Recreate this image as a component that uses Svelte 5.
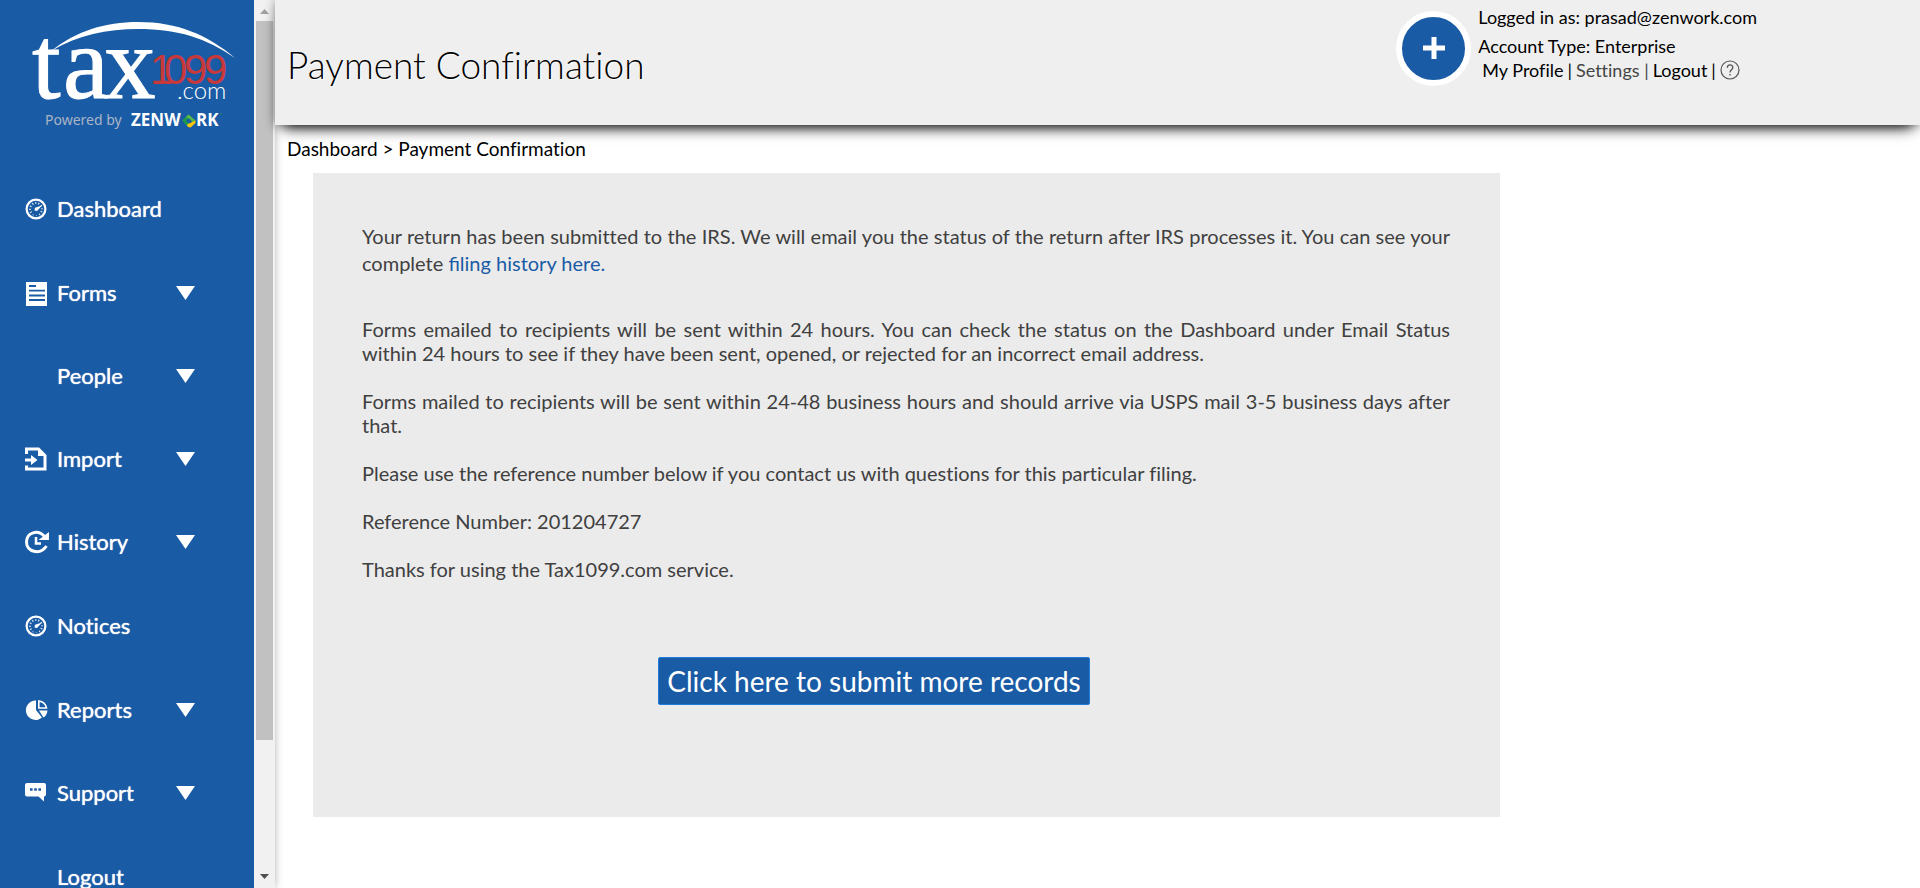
<script>
  const items = [
    { label: 'Dashboard', icon: 'gauge', menu: false },
    { label: 'Forms', icon: 'form', menu: true },
    { label: 'People', icon: '', menu: true },
    { label: 'Import', icon: 'import', menu: true },
    { label: 'History', icon: 'history', menu: true },
    { label: 'Notices', icon: 'gauge', menu: false },
    { label: 'Reports', icon: 'pie', menu: true },
    { label: 'Support', icon: 'chat', menu: true },
    { label: 'Logout', icon: '', menu: false }
  ];
</script>

<div class="app">
  <aside class="sidebar">
    <div class="side-content">
      <a class="logo" href="#home" aria-label="tax1099.com, powered by Zenwork">
        <svg width="254" height="140" viewBox="0 0 254 140">
          <path d="M51 51C76 31 105 22 138 22C178 22 208 35 235 58C206 38 178 29 138 29C107 29 78 35 51 51Z" fill="#fff" />
          <text class="tax" x="32 63 104" y="98">tax</text>
          <text class="digits" x="150 164 184 204" y="84">1099</text>
          <text class="com" x="177" y="99">.com</text>
          <text class="powered" x="45" y="125">Powered by</text>
          <text class="zen" x="131" y="126">ZENW</text>
          <text class="zen" x="196" y="126">RK</text>
          <path d="M182 120.500L188.500 114.500L191.500 117L187.500 121L190.500 124.500L188 127Z" fill="#1d9a4b" />
          <path d="M188.500 114.500L195.500 120.500L193 122.500L186 117Z" fill="#57b847" />
          <path d="M188 127L187 124.500L195.500 120.500V123L190.500 127.500Z" fill="#fdc60b" />
          <path d="M188.700 118.300L191.700 120.700L188.500 123L186 120.800Z" fill="#1a5ba5" />
          <circle cx="221" cy="114" r="1" fill="#1d7a6b" />
        </svg>
      </a>
      <nav>
        {#each items as item}
          <a class="item" class:leaf={!item.menu} href="#{item.label.toLowerCase()}">
            <span class="icon">
              {#if item.icon === 'gauge'}
                <svg width="24" height="24" viewBox="0 0 24 24">
                  <circle cx="11" cy="12" r="9.400" fill="none" stroke="#fff" stroke-width="2.200" />
                  <circle cx="11" cy="12" r="6" fill="none" stroke="#fff" stroke-width="2" stroke-dasharray="1.200 1.900" stroke-dashoffset="1" pathLength="37" opacity=".8" />
                  <path d="M10 10.800L17 8.500L12 14L9.500 13.500Z" fill="#fff" />
                  <path d="M7 15.500H15L13 18.500H9Z" fill="#1a5ba5" />
                </svg>
              {:else if item.icon === 'form'}
                <svg width="24" height="26" viewBox="0 0 24 26">
                  <path d="M1 2H22V26H1Z" fill="#fff" />
                  <path d="M4 6H11M4 10.700H20M4 15.500H20M4 20H20" stroke="#1a5ba5" stroke-width="1.800" />
                </svg>
              {:else if item.icon === 'import'}
                <svg width="24" height="24" viewBox="0 0 24 24">
                  <path d="M1.500 7V2H13.500L20 8.500V22H1.500V18.500" fill="none" stroke="#fff" stroke-width="3" />
                  <path d="M13 1.500V9H20.500Z" fill="#fff" />
                  <path d="M0 11.500H6V8L12.500 13L6 18V14.500H0Z" fill="#fff" />
                </svg>
              {:else if item.icon === 'history'}
                <svg width="24" height="24" viewBox="0 0 24 24">
                  <path d="M19.500 6.500C13 -1 1.500 2.500 1.500 12C1.500 22 15 25.500 21.500 16" fill="none" stroke="#fff" stroke-width="3" />
                  <path d="M24 2V10H13.500Z" fill="#fff" />
                  <path d="M11 7V13.500H16" fill="none" stroke="#fff" stroke-width="2.500" />
                </svg>
              {:else if item.icon === 'pie'}
                <svg width="24" height="24" viewBox="0 0 24 24">
                  <path d="M11 2.500V12L17 19.500A9.700 9.700 0 1 1 11 2.500Z" fill="#fff" />
                  <path d="M13.800 3A9 9 0 0 1 21.500 10H13.800Z" fill="none" stroke="#fff" stroke-width="1.600" />
                  <path d="M14 12.500H22.500Q22 17 18.500 19.500Z" fill="#fff" />
                </svg>
              {:else if item.icon === 'chat'}
                <svg width="24" height="24" viewBox="0 0 24 24">
                  <path d="M2 2H19A2 2 0 0 1 21 4V13.500A2 2 0 0 1 19 15.500V20.500L13.500 15.500H2A2 2 0 0 1 0 13.500V4A2 2 0 0 1 2 2Z" fill="#fff" />
                  <path d="M5 8.500H16" stroke="#1a5ba5" stroke-width="2.500" stroke-dasharray="2.600 1.600" />
                </svg>
              {/if}
            </span>
            <span class="label">{item.label}</span>
            {#if item.menu}
              <svg class="caret" width="19" height="14" viewBox="0 0 19 14"><path d="M0 0H19L9.500 14Z" fill="#fff" /></svg>
            {/if}
          </a>
        {/each}
      </nav>
    </div>
    <div class="track" aria-hidden="true">
      <svg width="9" height="5" viewBox="0 0 9 5"><path d="M0 5L4.500 0L9 5Z" fill="#a0a0a0" /></svg>
      <div class="rail"><div class="thumb"></div></div>
      <svg width="9" height="5" viewBox="0 0 9 5"><path d="M0 0L4.500 5L9 0Z" fill="#505050" /></svg>
    </div>
  </aside>

  <div class="page">
    <header>
      <h1>Payment Confirmation</h1>
      <div class="account">
        <button class="plus" aria-label="Add">
          <svg width="24" height="24" viewBox="0 0 24 24"><path d="M12 0V22M1 11H23" stroke="#fff" stroke-width="5" /></svg>
        </button>
        <div class="details">
          <div class="who">Logged in as: prasad@zenwork.com</div>
          <div class="type">Account Type: Enterprise</div>
          <div class="links">
            <a href="#profile">My Profile</a> | <span class="soft"><a href="#settings">Settings</a> |</span>
            <a href="#logout">Logout</a> |
            <a class="help" href="#help" aria-label="Help">
              <svg width="20" height="20" viewBox="0 0 20 20">
                <circle cx="10" cy="10" r="9" fill="none" stroke="#555" stroke-width="1.200" />
                <path d="M7.300 7.800C7.300 4 12.800 4 12.800 7.500C12.800 9.800 10 9.800 10 12.500M10 14V15.500" fill="none" stroke="#555" stroke-width="1.300" />
              </svg>
            </a>
          </div>
        </div>
      </div>
    </header>

    <main>
      <div class="crumbs"><a href="#dashboard">Dashboard</a> &gt; Payment Confirmation</div>
      <section class="panel">
        <p class="lead">
          Your return has been submitted to the IRS. We will email you the status of the return after IRS processes it.
          You can see your complete <a href="#history">filing history here.</a>
        </p>
        <p>
          Forms emailed to recipients will be sent within 24 hours. You can check the status on the Dashboard under
          Email Status within 24 hours to see if they have been sent, opened, or rejected for an incorrect email
          address.
        </p>
        <p>
          Forms mailed to recipients will be sent within 24-48 business hours and should arrive via USPS mail 3-5
          business days after that.
        </p>
        <p>Please use the reference number below if you contact us with questions for this particular filing.</p>
        <p>Reference Number: 201204727</p>
        <p>Thanks for using the Tax1099.com service.</p>
        <div class="actions"><button class="submit">Click here to submit more records</button></div>
      </section>
    </main>
  </div>
</div>

<style>
  :global(body) { background: #fff; }
  .app {
    display: flex;
    height: 100vh;
    overflow: hidden;
    font-family: Lato, sans-serif;
    font-variant-ligatures: none;
    color: #000;
  }
  a { color: inherit; text-decoration: none; }
  svg { display: block; }

  .sidebar {
    flex: none;
    display: flex;
    box-shadow: 0 0 8px rgba(0, 0, 0, .3);
  }
  .side-content {
    width: 254px;
    overflow: hidden;
    background: #1a5ba5;
    color: #fff;
  }
  .logo { display: block; padding-bottom: 26px; }
  .tax { font: 103px "Liberation Serif", serif; fill: #fff; stroke: #fff; stroke-width: 1px; }
  .digits { font: 42px "Liberation Sans", sans-serif; fill: #c8393b; }
  .com { font: 300 24px Lato, sans-serif; fill: #fff; }
  .powered { font: 14px "Noto Sans", sans-serif; fill: #a9b4c6; }
  .zen { font: bold 17px "Open Sans", sans-serif; fill: #fff; }

  .item {
    display: flex;
    align-items: center;
    height: 83px;
    padding-left: 25px;
    font-size: 22px;
  }
  .item.leaf { height: 85px; }
  .icon { width: 24px; margin-right: 8px; }
  .label { width: 119px; text-shadow: 0 0 1px #fff; }

  .track {
    display: flex;
    flex-direction: column;
    align-items: center;
    justify-content: space-between;
    box-sizing: border-box;
    width: 21px;
    padding: 9px 0;
    background: #f1f1f1;
  }
  .rail { flex: 1; width: 17px; margin: 7px 0; }
  .thumb { height: 85%; background: #c1c1c1; }

  .page { flex: 1; min-width: 0; }
  header {
    position: relative;
    display: flex;
    justify-content: space-between;
    height: 125px;
    padding: 0 163px 0 12px;
    background: #efefef;
    box-shadow: 0 10px 14px -8px #000, 0 0 10px rgba(0, 0, 0, .4);
  }
  h1 {
    margin: 0;
    padding-top: 43px;
    font-size: 37px;
    font-weight: 300;
    line-height: 44px;
    text-shadow: 1px 1px 1px #fff;
  }
  .account { display: flex; gap: 7px; font-size: 18px; line-height: 24px; padding-top: 5px; }
  .plus {
    display: grid;
    place-items: center;
    width: 75px;
    height: 75px;
    margin-top: 6px;
    padding: 0;
    border: 6px solid #fff;
    border-radius: 50%;
    background: #1a5ba5;
  }
  .type { padding-top: 5px; }
  .links { display: flex; gap: 4px; padding-left: 4px; }
  .soft { color: #444; }
  .help { align-self: center; }

  main { padding: 0 38px; }
  .crumbs { margin-left: -26px; padding: 12px 0; font-size: 19px; line-height: 24px; }
  .panel {
    box-sizing: border-box;
    max-width: 1187px;
    padding: 50px 50px 112px 49px;
    background: #ebebeb;
    color: #404040;
    font-size: 20px;
    line-height: 24px;
  }
  p { margin: 0 0 24px; text-align: justify; }
  .lead { margin-bottom: 40px; line-height: 27px; }
  .lead a { color: #1a5ba5; font-variant-ligatures: normal; }
  .actions { display: flex; justify-content: center; padding: 52px 64px 0 0; }
  .submit {
    height: 48px;
    padding: 0 8px;
    border: 1px solid #1e7be0;
    border-radius: 2px;
    background: #1a5ba5;
    color: #fff;
    font: 28px Lato, sans-serif;
  }
</style>
